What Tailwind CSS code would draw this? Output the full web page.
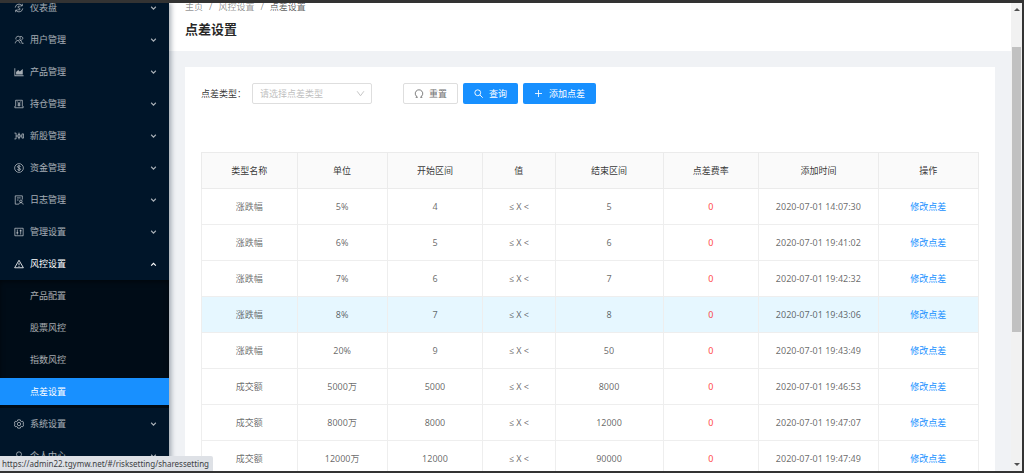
<!DOCTYPE html>
<html lang="zh-CN">
<head>
<meta charset="utf-8">
<title>点差设置</title>
<script src="https://cdn.jsdelivr.net/npm/@tailwindcss/browser@4"></script>
</head>
<body class="relative flex h-screen overflow-hidden border-t-3 border-r-2 border-b-2 border-[#333333] bg-[#f0f2f5] font-['Noto_Sans','Open_Sans','Noto_Sans_CJK_SC',sans-serif] text-[9px] leading-4 text-black/60">

<svg class="hidden" aria-hidden="true">
  <symbol id="down" viewBox="0 0 12 12"><path d="M2 3l4 4 4-4" fill="none" stroke="currentColor" stroke-width="2"/></symbol>
  <symbol id="up" viewBox="0 0 12 12"><path d="M2 8l4-4 4 4" fill="none" stroke="currentColor" stroke-width="2"/></symbol>
</svg>

<aside class="z-10 w-[169px] shrink-0 overflow-hidden bg-[#001529] text-white/65 shadow-[2px_0_5px_rgba(0,21,41,0.35)]">
  <nav class="-mt-[11px]">
    <a href="#" class="flex h-8 items-center gap-[6px] pr-3 pl-[14px]">
      <svg class="size-[10px]" viewBox="0 0 24 24" fill="none" stroke="currentColor" stroke-width="2"><path d="M3 11a9 9 0 0 1 16-5M21 13a9 9 0 0 1-16 5M20 2v5h-5M4 22v-5h5M15 9c-1-2-6-2-6 .5S15 12 15 14.500s-5 2.500-6 .5"/></svg>
      <span class="flex-1">仪表盘</span><svg class="size-[7px]"><use href="#down"/></svg></a>
    <a href="#" class="flex h-8 items-center gap-[6px] pr-3 pl-[14px]">
      <svg class="size-[10px]" viewBox="0 0 24 24" fill="none" stroke="currentColor" stroke-width="2"><path d="M5 11c-2-4 1-8 5-8 3 0 5 2 5 5s-2 5-5 5c-4 0-7 3-7 7M14 4c5-2 8 2 7 5-1 2-3 4-6 4 3 1 4 4 4 7h4M11 14l4 6"/></svg>
      <span class="flex-1">用户管理</span><svg class="size-[7px]"><use href="#down"/></svg></a>
    <a href="#" class="flex h-8 items-center gap-[6px] pr-3 pl-[14px]">
      <svg class="size-[10px]" viewBox="0 0 24 24" fill="currentColor"><path d="M1 3h2v17h20v2H1zM5 18v-6l5-5 4 4 7-6v13z"/></svg>
      <span class="flex-1">产品管理</span><svg class="size-[7px]"><use href="#down"/></svg></a>
    <a href="#" class="flex h-8 items-center gap-[6px] pr-3 pl-[14px]">
      <svg class="size-[10px]" viewBox="0 0 24 24" fill="none" stroke="currentColor" stroke-width="2"><path d="M4 3h16v15M4 3v15M2 17v4h20v-4M8 6l4 5 4-5M12 11v7M8.500 12h7M8.500 15h7"/></svg>
      <span class="flex-1">持仓管理</span><svg class="size-[7px]"><use href="#down"/></svg></a>
    <a href="#" class="flex h-8 items-center gap-[6px] pr-3 pl-[14px]">
      <svg class="size-[10px]" viewBox="0 0 24 24" fill="none" stroke="currentColor" stroke-width="2"><path d="M1 5h4v14H1M10 8h4v8h-4zM12 4v4M12 16v4M19 7h4v10h-4zM5 12h5M14 12h5"/></svg>
      <span class="flex-1">新股管理</span><svg class="size-[7px]"><use href="#down"/></svg></a>
    <a href="#" class="flex h-8 items-center gap-[6px] pr-3 pl-[14px]">
      <svg class="size-[10px]" viewBox="0 0 24 24" fill="none" stroke="currentColor" stroke-width="2"><circle cx="12" cy="12" r="10.500"/><path d="M16 9c-1-3-8-3-8 0s8 3 8 6-7 3-8 0M12 5v14"/></svg>
      <span class="flex-1">资金管理</span><svg class="size-[7px]"><use href="#down"/></svg></a>
    <a href="#" class="flex h-8 items-center gap-[6px] pr-3 pl-[14px]">
      <svg class="size-[10px]" viewBox="0 0 24 24" fill="none" stroke="currentColor" stroke-width="2"><path d="M10 22H3V2h17v9M7 7h9M7 12h4"/><circle cx="16.500" cy="15" r="3"/><path d="M11 23c0-6 11-6 11 0"/></svg>
      <span class="flex-1">日志管理</span><svg class="size-[7px]"><use href="#down"/></svg></a>
    <a href="#" class="flex h-8 items-center gap-[6px] pr-3 pl-[14px]">
      <svg class="size-[10px]" viewBox="0 0 24 24" fill="none" stroke="currentColor" stroke-width="2"><path d="M2 3h20v18H2zM8 6v12M16 6v12M5.500 14h5M13.500 9h5"/></svg>
      <span class="flex-1">管理设置</span><svg class="size-[7px]"><use href="#down"/></svg></a>
    <a href="#" class="flex h-8 items-center gap-[6px] pr-3 pl-[14px] text-white">
      <svg class="size-[10px]" viewBox="0 0 24 24" fill="none" stroke="currentColor" stroke-width="2"><path d="M12 3l10.500 18h-21zM12 9v6M12 17v2"/></svg>
      <span class="flex-1">风控设置</span><svg class="size-[7px]"><use href="#up"/></svg></a>
    <div class="flex flex-col gap-[5px] bg-[#000c17] pt-[2px] pb-[3px] shadow-[inset_0_2px_5px_rgba(0,0,0,0.45)]">
      <a href="#" class="flex h-[27px] items-center pl-[30px]">产品配置</a>
      <a href="#" class="flex h-[27px] items-center pl-[30px]">股票风控</a>
      <a href="#" class="flex h-[27px] items-center pl-[30px]">指数风控</a>
      <a href="#" aria-current="page" class="flex h-[27px] items-center bg-[#1890ff] pl-[30px] text-white">点差设置</a>
    </div>
    <a href="#" class="flex h-8 items-center gap-[6px] pr-3 pl-[14px]">
      <svg class="size-[10px]" viewBox="0 0 24 24" fill="none" stroke="currentColor" stroke-width="2"><path d="M9 2h6l1 3 2 1 3-.5 2.500 5L21 12l2.500 2-2.500 4.500-3-.5-2 1-1 3H9l-1-3-2-1-3 .5L.5 14 3 12 .5 10 3 5.500l3 .5 2-1z"/><circle cx="12" cy="12" r="4"/></svg>
      <span class="flex-1">系统设置</span><svg class="size-[7px]"><use href="#down"/></svg></a>
    <a href="#" class="flex h-8 items-center gap-[6px] pr-3 pl-[14px]">
      <svg class="size-[10px]" viewBox="0 0 24 24" fill="none" stroke="currentColor" stroke-width="2"><circle cx="12" cy="8" r="6"/><path d="M3 23c0-12 18-12 18 0"/></svg>
      <span class="flex-1">个人中心</span><svg class="size-[7px]"><use href="#down"/></svg></a>
  </nav>
</aside>

<main class="min-w-0 flex-1 overflow-hidden">
  <header class="h-12 overflow-hidden bg-white px-4">
    <nav aria-label="面包屑" class="-mt-1 flex gap-[6px] text-black/45">
      <a href="#">主页</a><span>/</span><a href="#">风控设置</a><span>/</span><span class="text-black/65">点差设置</span>
    </nav>
    <h1 class="mt-1 text-[13px] leading-5 font-bold text-black/85">点差设置</h1>
  </header>

  <section class="m-4 bg-white p-4">
    <form class="flex h-[21px] items-center" onsubmit="return false">
      <label for="type" class="w-[51px] text-black/80">点差类型：</label>
      <div class="relative mr-[31px] h-[21px] w-[120px]">
        <select id="type" class="size-full appearance-none rounded-xs border border-[#dedede] bg-white pl-[7px] text-[#bfbfbf]"><option>请选择点差类型</option></select>
        <svg class="pointer-events-none absolute top-[6px] right-[7px] size-[9px] text-[#bfbfbf]" viewBox="0 0 12 12"><path d="M1.500 3l4.500 6 4.500-6" fill="none" stroke="currentColor" stroke-width="1.200"/></svg>
      </div>
      <div class="flex gap-[5px]">
        <button type="reset" class="flex h-[21px] w-[55px] items-center justify-center gap-[5px] rounded-xs border border-[#dedede] bg-white">
          <svg class="size-[10px]" viewBox="0 0 24 24" fill="none" stroke="currentColor" stroke-width="2"><path d="M8 20v-1a9 9 0 1 1 8 0v1M4 20h4M16 20h4"/></svg>重置</button>
        <button type="submit" class="flex h-[21px] w-[55px] items-center justify-center gap-[5px] rounded-xs bg-[#1890ff] text-white">
          <svg class="size-[10px]" viewBox="0 0 24 24" fill="none" stroke="currentColor" stroke-width="2.200"><circle cx="9" cy="9" r="7"/><path d="M14 14l7 7"/></svg>查询</button>
        <button type="button" class="flex h-[21px] w-[73px] items-center justify-center gap-[5px] rounded-xs bg-[#1890ff] text-white">
          <svg class="size-[10px]" viewBox="0 0 10 10" fill="none" stroke="currentColor" stroke-opacity="0.85"><path d="M4.500 1v7M1 4.500h7"/></svg>添加点差</button>
      </div>
    </form>

    <table class="mt-12 w-full table-fixed border-collapse text-center [&_td]:border [&_td]:border-[#eeeeee] [&_td]:p-0 [&_th]:border [&_th]:border-[#ebebeb] [&_th]:p-0 [&_tr]:h-9">
      <colgroup><col class="w-[12.3%]"><col class="w-[11.6%]"><col class="w-[12.3%]"><col class="w-[9.3%]"><col class="w-[13.9%]"><col class="w-[12.3%]"><col class="w-[15.4%]"><col></colgroup>
      <thead class="bg-[#fafafa] text-black/80 [&_th]:font-normal">
        <tr><th>类型名称</th><th>单位</th><th>开始区间</th><th>值</th><th>结束区间</th><th>点差费率</th><th>添加时间</th><th>操作</th></tr>
      </thead>
      <tbody>
        <tr><td>涨跌幅</td><td>5%</td><td>4</td><td>≤ X &lt;</td><td>5</td><td class="text-[#ff0000]/75">0</td><td>2020-07-01 14:07:30</td><td><a href="#" class="text-[#1890ff]">修改点差</a></td></tr>
        <tr><td>涨跌幅</td><td>6%</td><td>5</td><td>≤ X &lt;</td><td>6</td><td class="text-[#ff0000]/75">0</td><td>2020-07-01 19:41:02</td><td><a href="#" class="text-[#1890ff]">修改点差</a></td></tr>
        <tr><td>涨跌幅</td><td>7%</td><td>6</td><td>≤ X &lt;</td><td>7</td><td class="text-[#ff0000]/75">0</td><td>2020-07-01 19:42:32</td><td><a href="#" class="text-[#1890ff]">修改点差</a></td></tr>
        <tr class="bg-[#e6f7ff]"><td>涨跌幅</td><td>8%</td><td>7</td><td>≤ X &lt;</td><td>8</td><td class="text-[#ff0000]/75">0</td><td>2020-07-01 19:43:06</td><td><a href="#" class="text-[#1890ff]">修改点差</a></td></tr>
        <tr><td>涨跌幅</td><td>20%</td><td>9</td><td>≤ X &lt;</td><td>50</td><td class="text-[#ff0000]/75">0</td><td>2020-07-01 19:43:49</td><td><a href="#" class="text-[#1890ff]">修改点差</a></td></tr>
        <tr><td>成交额</td><td>5000万</td><td>5000</td><td>≤ X &lt;</td><td>8000</td><td class="text-[#ff0000]/75">0</td><td>2020-07-01 19:46:53</td><td><a href="#" class="text-[#1890ff]">修改点差</a></td></tr>
        <tr><td>成交额</td><td>8000万</td><td>8000</td><td>≤ X &lt;</td><td>12000</td><td class="text-[#ff0000]/75">0</td><td>2020-07-01 19:47:07</td><td><a href="#" class="text-[#1890ff]">修改点差</a></td></tr>
        <tr><td>成交额</td><td>12000万</td><td>12000</td><td>≤ X &lt;</td><td>90000</td><td class="text-[#ff0000]/75">0</td><td>2020-07-01 19:47:49</td><td><a href="#" class="text-[#1890ff]">修改点差</a></td></tr>
      </tbody>
    </table>
  </section>
</main>

<div class="flex w-[11px] shrink-0 flex-col items-center bg-[#f1f1f1] text-[#505050]">
  <svg class="mt-[3px] h-[6px] w-[6px]" viewBox="0 0 6 6" fill="currentColor"><path d="M0 5h6L3 2z"/></svg>
  <div class="mt-[35px] h-[61%] w-[9px] bg-[#c1c1c1]"></div>
  <svg class="mt-auto mb-[3px] h-[6px] w-[6px]" viewBox="0 0 6 6" fill="currentColor"><path d="M0 1h6L3 4z"/></svg>
</div>

<div class="absolute bottom-0 left-0 z-20 rounded-tr-xs bg-[#dee1e6] pr-1 pl-[2px] text-[8px] leading-[15px] text-[#3c4043]">https://admin22.tgymw.net/#/risksetting/sharessetting</div>
</body>
</html>
